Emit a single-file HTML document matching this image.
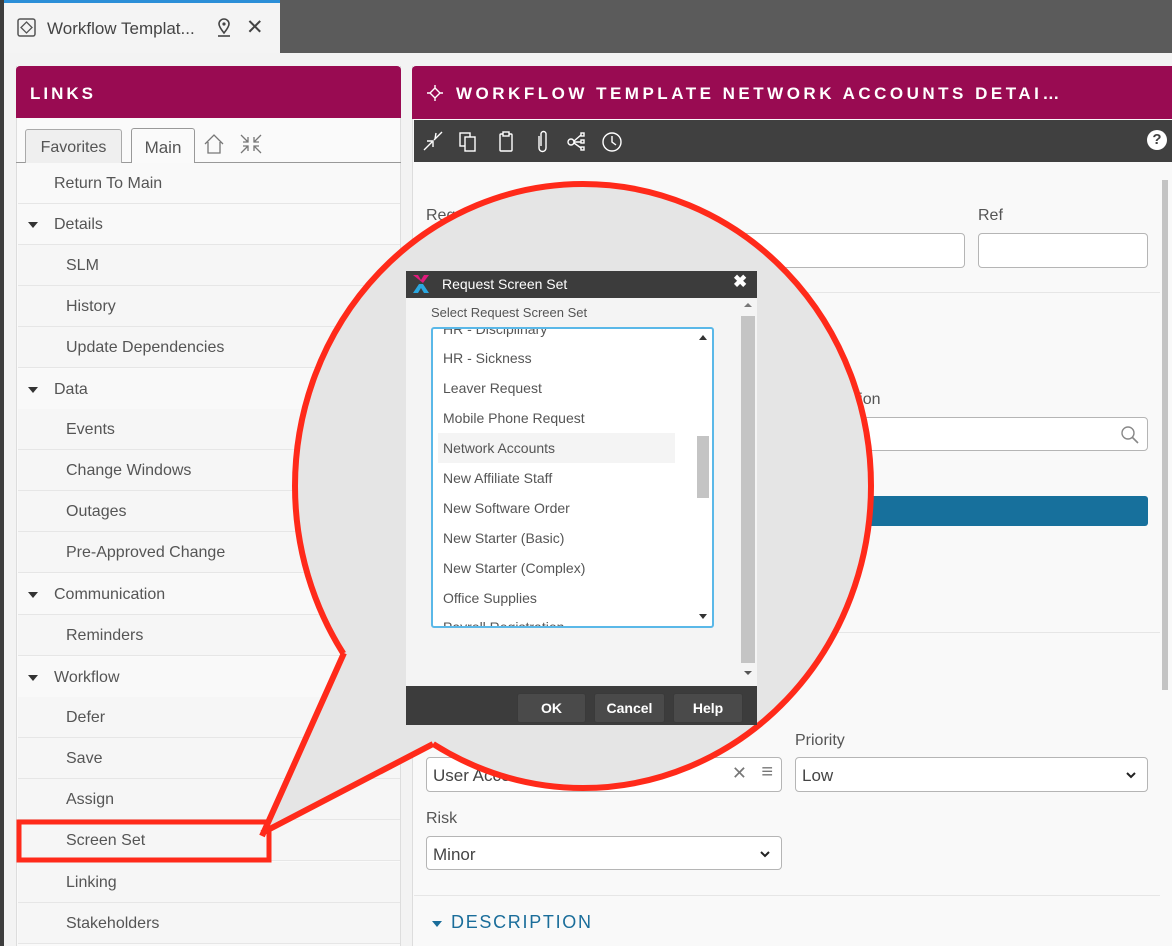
<!DOCTYPE html>
<html><head><meta charset="utf-8"><style>
*{box-sizing:border-box;margin:0;padding:0}
body{width:1172px;height:946px;overflow:hidden;background:#f0f0f0;font-family:"Liberation Sans",sans-serif;position:relative;color:#555}
.a{position:absolute}
.row{position:absolute;left:18px;width:382px;height:41px;border-bottom:1px solid #e6e6e6;background:#f9f9f9;font-size:16px;color:#555;line-height:42px}
.row.sub{background:#f6f6f6}
.tri{position:absolute;left:10px;top:18px;width:0;height:0;border-left:5px solid transparent;border-right:5px solid transparent;border-top:6px solid #333}
.inp{position:absolute;background:#fff;border:1px solid #b5b5b5;border-radius:4px}
.lbl{position:absolute;font-size:16px;color:#555}
.li{position:absolute;left:10px;font-size:14px;color:#555}
.btn{position:absolute;top:693px;height:30px;background:#4a4a4a;border:1px solid #3a3a3a;border-radius:3px;color:#fff;font-size:14px;font-weight:bold;text-align:center;line-height:28px}
.chev{position:absolute;right:10px;top:13px}
</style></head><body>
<div class="a" style="left:0;top:0;width:1172px;height:53px;background:#5b5b5b"></div>
<div class="a" style="left:0;top:0;width:4px;height:946px;background:#3d3d3d"></div>
<div class="a" style="left:4px;top:0;width:276px;height:53px;background:#f4f4f4;border-top:3px solid #2b8fd8"></div>
<div class="a" style="left:4px;top:53px;width:1168px;height:893px;background:#f3f3f3"></div>
<svg class="a" style="left:17px;top:18px" width="20" height="20"><rect x="1" y="1" width="17" height="17" rx="2" fill="none" stroke="#555" stroke-width="1.5"/><path d="M9.5 4 L15 9.5 L9.5 15 L4 9.5Z" fill="none" stroke="#555" stroke-width="1.3"/></svg>
<div class="a" style="left:47px;top:19px;font-size:17px;color:#444">Workflow Templat...</div>
<svg class="a" style="left:216px;top:18px" width="16" height="20"><path d="M8 15 C4 10 3 8 3 6 A5 5 0 0 1 13 6 C13 8 12 10 8 15Z" fill="none" stroke="#444" stroke-width="1.6"/><circle cx="8" cy="6" r="1.6" fill="#444"/><line x1="2" y1="18" x2="14" y2="18" stroke="#444" stroke-width="1.6"/></svg>
<div class="a" style="left:246px;top:15px;font-size:21px;color:#444">✕</div>

<div class="a" style="left:16px;top:66px;width:385px;height:880px;background:#fafafa;border-left:1px solid #ddd;border-right:1px solid #ddd"></div>
<div class="a" style="left:16px;top:66px;width:385px;height:52px;background:#990b52;border-radius:4px 4px 0 0;color:#fff;font-weight:bold;font-size:17px;letter-spacing:3px;line-height:55px;padding-left:14px">LINKS</div>
<div class="a" style="left:16px;top:162px;width:385px;height:1px;background:#999"></div>
<div class="a" style="left:25px;top:129px;width:97px;height:34px;background:#efefef;border:1px solid #aaa;border-bottom:none;border-radius:3px 3px 0 0;font-size:16px;color:#555;text-align:center;line-height:36px">Favorites</div>
<div class="a" style="left:131px;top:128px;width:64px;height:36px;background:#fafafa;border:1px solid #999;border-bottom:none;border-radius:3px 3px 0 0;font-size:17px;color:#555;text-align:center;line-height:38px">Main</div>
<svg class="a" style="left:203px;top:133px" width="22" height="22"><path d="M2 11 L11 2 L20 11 M5 9 V20 H17 V9" fill="none" stroke="#777" stroke-width="1.3"/></svg>
<svg class="a" style="left:239px;top:133px" width="24" height="22"><g stroke="#777" stroke-width="1.3" fill="none"><path d="M2 2 L9 9 M9 4 V9 H4 M22 2 L15 9 M15 4 V9 H20 M2 20 L9 13 M9 18 V13 H4 M22 20 L15 13 M15 18 V13 H20"/></g></svg>

<div class="row" style="top:163px;padding-left:36px">Return To Main</div>
<div class="row" style="top:204px;padding-left:36px"><span class="tri"></span>Details</div>
<div class="row sub" style="top:245px;padding-left:48px">SLM</div>
<div class="row sub" style="top:286px;padding-left:48px">History</div>
<div class="row sub" style="top:327px;padding-left:48px">Update Dependencies</div>
<div class="row" style="top:369px;padding-left:36px"><span class="tri"></span>Data</div>
<div class="row sub" style="top:409px;padding-left:48px">Events</div>
<div class="row sub" style="top:450px;padding-left:48px">Change Windows</div>
<div class="row sub" style="top:491px;padding-left:48px">Outages</div>
<div class="row sub" style="top:532px;padding-left:48px">Pre-Approved Change</div>
<div class="row" style="top:574px;padding-left:36px"><span class="tri"></span>Communication</div>
<div class="row sub" style="top:615px;padding-left:48px">Reminders</div>
<div class="row" style="top:657px;padding-left:36px"><span class="tri"></span>Workflow</div>
<div class="row sub" style="top:697px;padding-left:48px">Defer</div>
<div class="row sub" style="top:738px;padding-left:48px">Save</div>
<div class="row sub" style="top:779px;padding-left:48px">Assign</div>
<div class="row sub" style="top:820px;padding-left:48px">Screen Set</div>
<div class="row sub" style="top:862px;padding-left:48px">Linking</div>
<div class="row sub" style="top:903px;padding-left:48px">Stakeholders</div>

<div class="a" style="left:412px;top:66px;width:760px;height:880px;background:#f9f9f9;border-left:1px solid #ddd"></div>
<div class="a" style="left:412px;top:66px;width:760px;height:53px;background:#990b52;border-radius:4px 0 0 0;color:#fff;font-weight:bold;font-size:17px;letter-spacing:3.5px;line-height:55px;padding-left:44px;white-space:nowrap">WORKFLOW TEMPLATE NETWORK ACCOUNTS DETAI…</div>
<svg class="a" style="left:426px;top:84px" width="18" height="18"><path d="M9 1 L9 4 M9 14 L9 17 M1 9 L4 9 M14 9 L17 9 M9 4 L14 9 L9 14 L4 9Z" fill="none" stroke="#fff" stroke-width="1.4"/></svg>
<div class="a" style="left:414px;top:120px;width:758px;height:42px;background:#404040"></div>
<svg class="a" style="left:420px;top:128px" width="220" height="28"><g fill="none" stroke="#fff" stroke-width="1.4">
<path d="M4 22 L12 14 M7 13 H13 V19 M22 4 L14 12 M16 5 L15 11"/>
<rect x="40" y="5" width="10" height="13"/><rect x="45" y="9" width="10" height="14" fill="#404040"/>
<rect x="80" y="6" width="12" height="17" rx="1"/><rect x="83" y="4" width="6" height="4" fill="#404040"/>
<path d="M119 8 V20 A3.5 3.5 0 0 0 126 20 V6 A2.5 2.5 0 0 0 121 6 V18"/>
<circle cx="151" cy="14" r="3"/><rect x="161" y="5" width="3" height="3"/><rect x="161" y="19" width="3" height="3"/><rect x="161" y="12" width="3" height="3"/><path d="M154 13 L161 7 M154 15 L161 20 M154 14 H161"/>
<circle cx="192" cy="14" r="9"/><path d="M192 8 V14 L196 17"/></g></svg>
<div class="a" style="left:1147px;top:130px;width:20px;height:20px;border-radius:50%;background:#fff;color:#404040;font-weight:bold;font-size:15px;text-align:center;line-height:20px">?</div>
<div class="a" style="left:1162px;top:180px;width:6px;height:510px;background:#c4c4c4"></div>

<div class="lbl" style="left:426px;top:207px">Req</div>
<div class="inp" style="left:426px;top:233px;width:539px;height:35px"></div>
<div class="lbl" style="left:978px;top:207px">Ref</div>
<div class="inp" style="left:978px;top:233px;width:170px;height:35px"></div>
<div class="a" style="left:414px;top:292px;width:746px;height:1px;background:#e6e6e6"></div>
<div class="lbl" style="left:820px;top:391px">Location</div>
<div class="inp" style="left:426px;top:417px;width:722px;height:34px"></div>
<svg class="a" style="left:1120px;top:425px" width="20" height="20"><circle cx="8" cy="8" r="6" fill="none" stroke="#888" stroke-width="1.4"/><path d="M12.5 12.5 L18 18" stroke="#888" stroke-width="1.6"/></svg>
<div class="a" style="left:426px;top:496px;width:722px;height:30px;background:#17709c;border-radius:3px"></div>
<div class="a" style="left:414px;top:632px;width:746px;height:1px;background:#e6e6e6"></div>
<div class="lbl" style="left:795px;top:732px">Priority</div>
<div class="inp" style="left:426px;top:757px;width:356px;height:35px;font-size:17px;padding:8px 6px;color:#444">User Access<span style="position:absolute;right:34px;top:5px;color:#777;font-size:18px">✕</span><span style="position:absolute;right:8px;top:3px;color:#777;font-size:20px">≡</span></div>
<div class="inp" style="left:795px;top:757px;width:353px;height:35px;font-size:17px;padding:8px 6px;color:#444">Low<svg class="chev" width="12" height="8"><path d="M2 2 L6 6 L10 2" fill="none" stroke="#222" stroke-width="2"/></svg></div>
<div class="lbl" style="left:426px;top:810px">Risk</div>
<div class="inp" style="left:426px;top:836px;width:356px;height:34px;font-size:17px;padding:8px 6px;color:#444">Minor<svg class="chev" width="12" height="8"><path d="M2 2 L6 6 L10 2" fill="none" stroke="#222" stroke-width="2"/></svg></div>
<div class="a" style="left:414px;top:895px;width:746px;height:1px;background:#e6e6e6"></div>
<div class="a" style="left:432px;top:921px;border-left:5px solid transparent;border-right:5px solid transparent;border-top:6px solid #1a6d9a"></div>
<div class="a" style="left:451px;top:912px;font-size:18px;color:#1a6d9a;letter-spacing:1.7px">DESCRIPTION</div>

<svg class="a" style="left:0;top:0" width="1172" height="946">
<rect x="19" y="822" width="250" height="38" fill="none" stroke="#ff2a1a" stroke-width="5"/>
<ellipse cx="583" cy="486" rx="288" ry="302" fill="#e5e5e5" stroke="#ff2a1a" stroke-width="6"/>
<polygon points="344,653 370,640 440,735 433,744 262,833" fill="#e5e5e5"/>
<path d="M344 653 L262 836 M433 744 L262 833" stroke="#ff2a1a" stroke-width="6" fill="none"/>
</svg>

<div class="a" style="left:406px;top:271px;width:351px;height:454px;background:#f4f4f4"></div>
<div class="a" style="left:406px;top:271px;width:351px;height:27px;background:#3c3c3c;color:#fff;font-size:14px;line-height:27px;padding-left:36px">Request Screen Set</div>
<svg class="a" style="left:412px;top:274px" width="18" height="20"><path d="M1 1 H6 L9 6 L12 1 H17 L11 9Z" fill="#e01a7b"/><path d="M7 10 H11 L17 19 H12 L9 14 L6 19 H1Z" fill="#2aa7e0"/></svg>
<div class="a" style="left:733px;top:272px;color:#fff;font-size:17px;font-weight:bold">✖</div>
<div class="a" style="left:431px;top:305px;font-size:13px;color:#555">Select Request Screen Set</div>
<div class="a" style="left:741px;top:316px;width:14px;height:347px;background:#c4c4c4"></div>
<div class="a" style="left:744px;top:303px;border-left:4px solid transparent;border-right:4px solid transparent;border-bottom:4px solid #777"></div>
<div class="a" style="left:744px;top:671px;border-left:4px solid transparent;border-right:4px solid transparent;border-top:4px solid #555"></div>
<div class="a" style="left:431px;top:327px;width:283px;height:301px;background:#fff;border:2px solid #5ab8e8;border-radius:3px;overflow:hidden">
<div class="li" style="top:-8px">HR - Disciplinary</div>
<div class="li" style="top:21px">HR - Sickness</div>
<div class="li" style="top:51px">Leaver Request</div>
<div class="li" style="top:81px">Mobile Phone Request</div>
<div class="a" style="left:5px;top:104px;width:237px;height:30px;background:#f4f4f4"></div>
<div class="li" style="top:111px">Network Accounts</div>
<div class="li" style="top:141px">New Affiliate Staff</div>
<div class="li" style="top:171px">New Software Order</div>
<div class="li" style="top:201px">New Starter (Basic)</div>
<div class="li" style="top:231px">New Starter (Complex)</div>
<div class="li" style="top:261px">Office Supplies</div>
<div class="li" style="top:290px">Payroll Registration</div>
<div class="a" style="left:264px;top:107px;width:12px;height:62px;background:#c4c4c4"></div>
<div class="a" style="left:266px;top:6px;border-left:4px solid transparent;border-right:4px solid transparent;border-bottom:5px solid #333"></div>
<div class="a" style="left:266px;top:285px;border-left:4px solid transparent;border-right:4px solid transparent;border-top:5px solid #333"></div>
</div>
<div class="a" style="left:406px;top:686px;width:351px;height:39px;background:#3c3c3c"></div>
<div class="btn" style="left:517px;width:69px">OK</div>
<div class="btn" style="left:594px;width:71px">Cancel</div>
<div class="btn" style="left:673px;width:70px">Help</div>
</body></html>
